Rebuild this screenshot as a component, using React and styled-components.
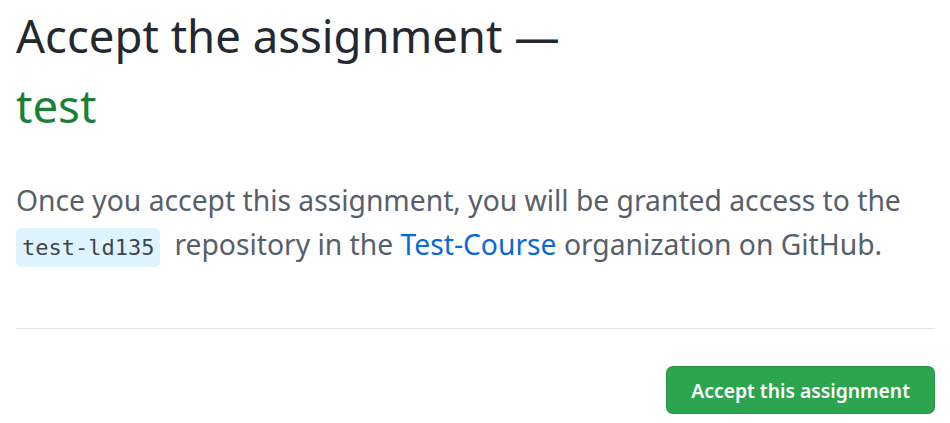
import React from "react";
import styled, { createGlobalStyle } from "styled-components";

const Global = createGlobalStyle`
  html, body { margin: 0; padding: 0; background: #ffffff; }
  body { font-family: "Noto Sans", "Open Sans", sans-serif; }
`;

const Page = styled.main`
  padding: 0 15px 0 16px;
  box-sizing: border-box;
  width: 950px;
`;

const Title = styled.h1`
  margin: 0;
  font-weight: 400;
  font-size: 45.5px;
  line-height: 70px;
  color: #24292f;
`;

const AssignmentName = styled.span`
  display: block;
  color: #1a7f37;
`;

const Lead = styled.p`
  margin: 38px 0 0;
  font-size: 28.25px;
  line-height: 44px;
  color: #57606a;
`;

const Code = styled.code`
  display: inline-block;
  font-family: "DejaVu Sans Mono", "Liberation Mono", monospace;
  font-size: 22px;
  line-height: 39px;
  padding: 0 6px;
  margin-right: 14px;
  border-radius: 6px;
  background: #ddf4ff;
  color: #3d444d;
  vertical-align: baseline;
`;

const Link = styled.a`
  color: #0969da;
  text-decoration: none;
`;

const Divider = styled.hr`
  margin: 61px 0 0;
  border: 0;
  border-top: 1px solid #e1e4e8;
`;

const Actions = styled.div`
  display: flex;
  justify-content: flex-end;
  padding-top: 37px;
`;

const Button = styled.button`
  font-family: "Noto Sans", "Open Sans", sans-serif;
  font-weight: 600;
  font-size: 19.3px;
  color: #ffffff;
  background: #2da44e;
  border: 1px solid rgba(27, 31, 36, 0.15);
  border-radius: 7px;
  height: 48px;
  padding: 0 24px;
  cursor: pointer;
`;

export default function App() {
  return (
    <>
      <Global />
      <Page>
        <Title>
          Accept the assignment —
          <AssignmentName>test</AssignmentName>
        </Title>
        <Lead>
          Once you accept this assignment, you will be granted access to the{" "}
          <Code>test-ld135</Code>
          repository in the <Link href="#">Test-Course</Link> organization on
          GitHub.
        </Lead>
        <Divider />
        <Actions>
          <Button>Accept this assignment</Button>
        </Actions>
      </Page>
    </>
  );
}
